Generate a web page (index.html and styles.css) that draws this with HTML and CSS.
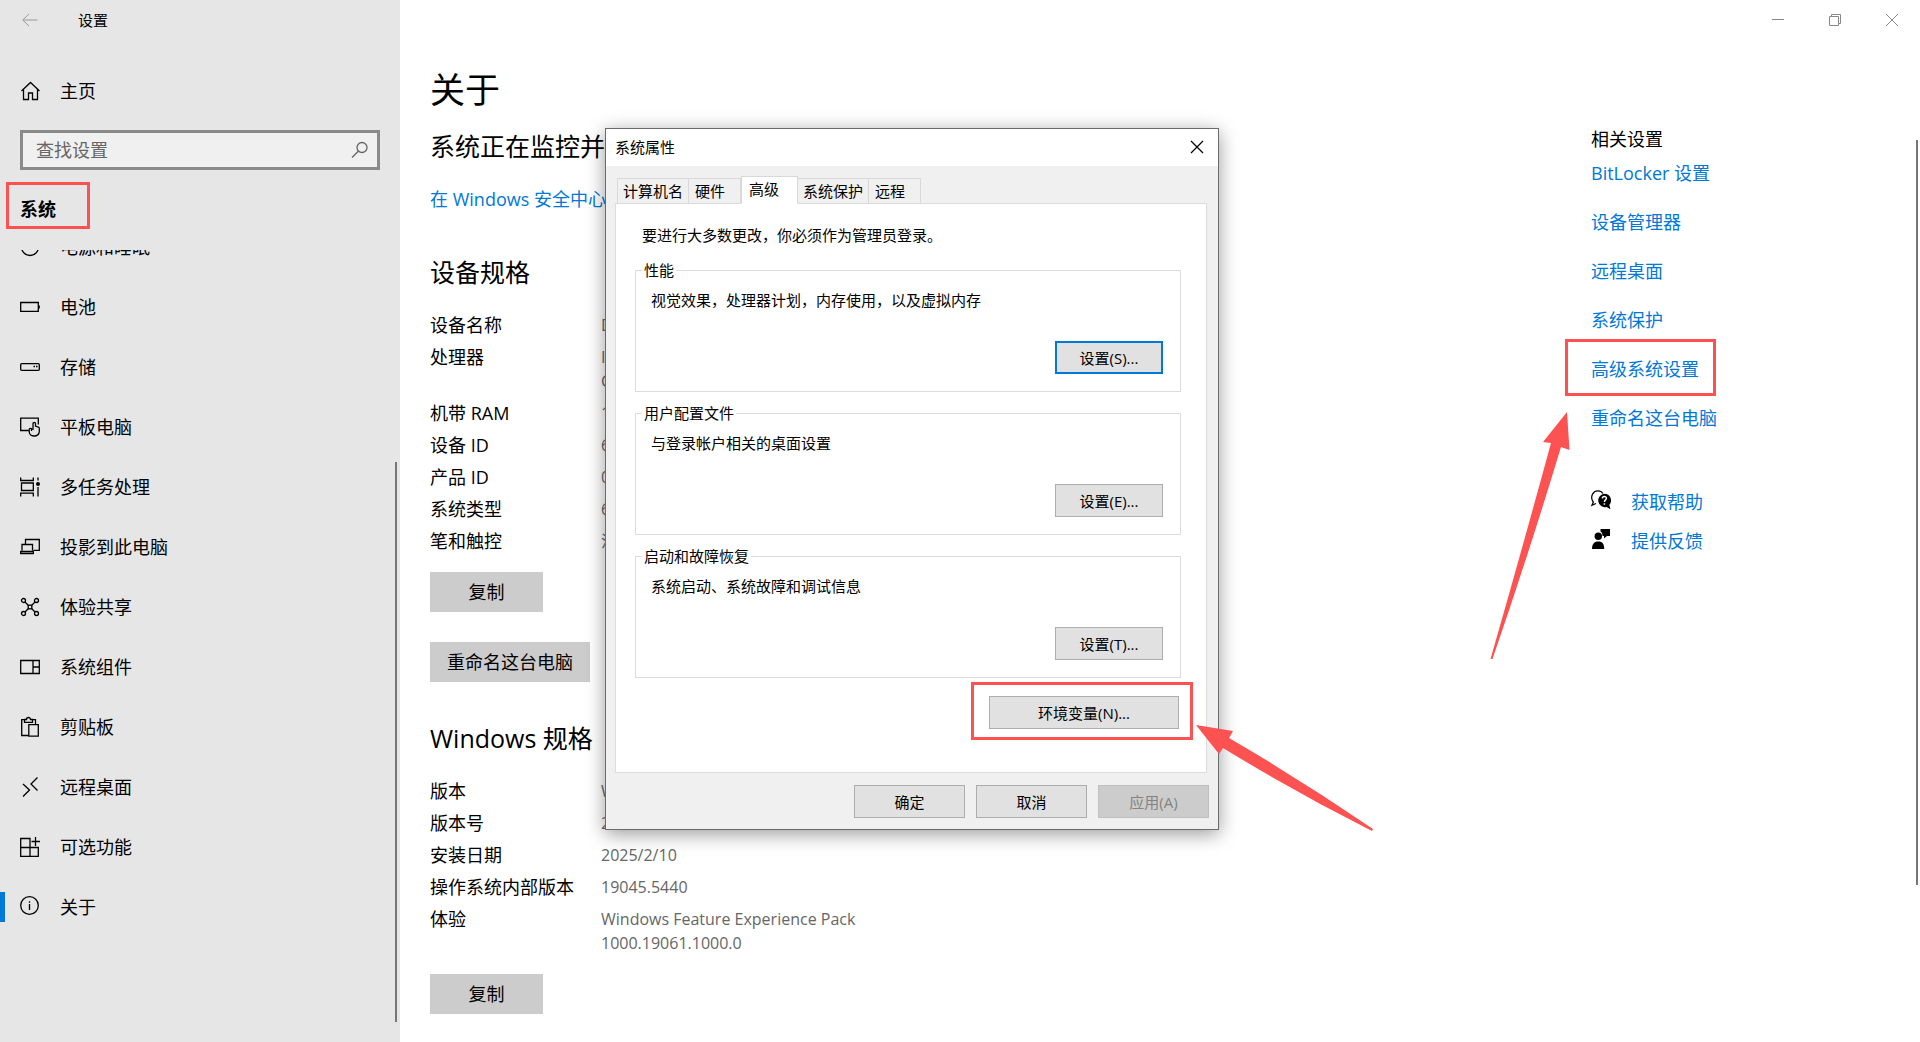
FILE: index.html
```html
<!doctype html>
<html lang="zh-CN">
<head>
    <meta charset="utf-8">
    <meta name="viewport" content="width=device-width, initial-scale=1">
    <title>设置</title>

    <link rel="stylesheet" href="styles.css">
</head>
<body>
<aside class="sidebar">
    <header class="titlebar">
        <button class="back" aria-label="返回">
            <svg width="16" height="14" viewBox="0 0 16 14"><path d="M15.500 7H1M7 .8L.8 7L7 13.200"/></svg>
        </button>
        <span>设置</span>
    </header>

    <a class="home" href="#">
        <svg class="icon" viewBox="0 0 20 20"><path d="M1.500 10L10.500 1.500L19.500 10M3.500 8.500V18.500H8.500V12H12.500V18.500H17.500V8.500"/></svg>
        <span>主页</span>
    </a>

    <div class="search">
        <input type="text" placeholder="查找设置" aria-label="查找设置">
        <svg width="18" height="18" viewBox="0 0 18 18"><circle cx="11" cy="6.500" r="5"/><path d="M7.300 10.200L1 16.500"/></svg>
    </div>

    <h2 class="group"><span class="mark mark-group"></span>系统</h2>

    <nav class="nav">
        <ul>
            <li><a href="#">
                <svg class="icon" viewBox="0 0 20 20"><circle cx="10" cy="10" r="8.500"/><path d="M10 1V10"/></svg>
                <span>电源和睡眠</span></a></li>
            <li><a href="#">
                <svg class="icon" viewBox="0 0 20 20"><path d="M.7 5.500H18.300V14.300H.7ZM19.200 8.500V11.500"/></svg>
                <span>电池</span></a></li>
            <li><a href="#">
                <svg class="icon" viewBox="0 0 20 20"><rect x=".7" y="6.700" width="18.600" height="6.600" rx="1"/><path d="M13.500 9.500H15M16 9.500H17.500"/></svg>
                <span>存储</span></a></li>
            <li><a href="#">
                <svg class="icon" viewBox="0 0 20 20"><path d="M8.500 13.500H.7V1.200H18.300V7.500M11.500 14V11.500C10 11 9.200 11.700 9.200 13V14.500C9.200 20.500 19.300 20.500 19.300 14.500V11C19.300 9.800 17.800 9.800 15.500 9.200V6.500C15.500 5 13 5 13 6.500V13"/></svg>
                <span>平板电脑</span></a></li>
            <li><a href="#">
                <svg class="icon" viewBox="0 0 20 20"><path d="M.7 .5V3.500H13.300V.5M1.500 6H13.300V13.500H1.500ZM.7 19.500V16.200H13.300V19.500M18 .5V3.500M18 10V19.500"/><circle class="fill" cx="18" cy="7" r="2"/></svg>
                <span>多任务处理</span></a></li>
            <li><a href="#">
                <svg class="icon" viewBox="0 0 20 20"><path d="M5.500 7.500V2.500H19.300V13.300H13.500M2 13.500V7.500H12.500V13.500M.7 16.500V14.500H13.300V16.500Z"/></svg>
                <span>投影到此电脑</span></a></li>
            <li><a href="#">
                <svg class="icon" viewBox="0 0 20 20"><circle cx="3.500" cy="3.500" r="2"/><circle cx="16.500" cy="3.500" r="2"/><circle cx="3.500" cy="16.500" r="2"/><circle cx="16.500" cy="16.500" r="2"/><rect x="8.200" y="8.200" width="3.600" height="3.600"/><path d="M5 5L8.200 8.200M15 5L11.800 8.200M5 15L8.200 11.800M15 15L11.800 11.800"/></svg>
                <span>体验共享</span></a></li>
            <li><a href="#">
                <svg class="icon" viewBox="0 0 20 20"><path d="M.7 3.500H19.300V16.500H.7ZM13 3.500V16.500M13 10H19.300"/></svg>
                <span>系统组件</span></a></li>
            <li><a href="#">
                <svg class="icon" viewBox="0 0 20 20"><path d="M8.500 18.500H1.700V2.700H4.500M12.500 2.700H15.500V7M4.500 2.500V5.300H12.500V2.500H10.500C10.500 -.2 6.500 -.2 6.500 2.500ZM8.800 7.700H18.300V19.200H8.800Z"/></svg>
                <span>剪贴板</span></a></li>
            <li><a href="#">
                <svg class="icon" viewBox="0 0 20 20"><path d="M3 7L9.500 13L3 19.500M17.500 .5L11 7L17.500 13.500"/></svg>
                <span>远程桌面</span></a></li>
            <li><a href="#">
                <svg class="icon" viewBox="0 0 20 20"><path d="M10 10.500H.7V1.500H10V19.300M.7 10.500V19.300H18.300V10.500H10M15.500 0V9M11.500 4.500H20"/></svg>
                <span>可选功能</span></a></li>
            <li><a class="current" href="#">
                <svg class="icon" viewBox="0 0 20 20"><circle cx="9.500" cy="8.500" r="8.800"/><path d="M9.500 7V13M9.500 4.200V5.700"/></svg>
                <span>关于</span></a></li>
        </ul>
    </nav>
    <div class="thumb thumb-side"></div>
</aside>

<main class="main">
    <div class="window-controls">
        <button aria-label="最小化"><svg width="14" height="14" viewBox="0 0 14 14"><path d="M1 6.500H13"/></svg></button>
        <button aria-label="还原"><svg width="14" height="14" viewBox="0 0 14 14"><path d="M1.500 3.500H10.500V12.500H1.500ZM3.500 3.500V1.500H12.500V10.500H10.500"/></svg></button>
        <button aria-label="关闭"><svg width="14" height="14" viewBox="0 0 14 14"><path d="M1 1L13 13M13 1L1 13"/></svg></button>
    </div>

    <div class="page">
        <section class="about">
            <h1>关于</h1>
            <p class="status">系统正在监控并保护你的电脑。</p>
            <a class="security" href="#">在 Windows 安全中心中查看详细信息</a>

            <h2>设备规格</h2>
            <dl class="specs">
                <dt>设备名称</dt><dd>DESKTOP</dd>
                <dt>处理器</dt><dd>Intel(R)<br>CPU</dd>
                <dt>机带 RAM</dt><dd>16.0 GB</dd>
                <dt>设备 ID</dt><dd>6</dd>
                <dt>产品 ID</dt><dd>0</dd>
                <dt>系统类型</dt><dd>64 位操作系统</dd>
                <dt>笔和触控</dt><dd>没有笔</dd>
            </dl>
            <button class="action">复制</button>
            <button class="action rename">重命名这台电脑</button>

            <h2>Windows 规格</h2>
            <dl class="specs">
                <dt>版本</dt><dd>Windows 10</dd>
                <dt>版本号</dt><dd>22H2</dd>
                <dt>安装日期</dt><dd>2025/2/10</dd>
                <dt>操作系统内部版本</dt><dd>19045.5440</dd>
                <dt>体验</dt><dd>Windows Feature Experience Pack<br>1000.19061.1000.0</dd>
            </dl>
            <button class="action">复制</button>
        </section>

        <section class="related">
            <h3>相关设置</h3>
            <ul>
                <li><a href="#">BitLocker 设置</a></li>
                <li><a href="#">设备管理器</a></li>
                <li><a href="#">远程桌面</a></li>
                <li><a href="#">系统保护</a></li>
                <li class="marked"><a href="#">高级系统设置</a>
                    <span class="mark mark-link"></span>
                    <svg class="arrow arrow-link" width="80" height="250" viewBox="0 0 80 250"><path d="M77 2L53 32L61 33Q31 143 .5 249H2.500Q39 143 71 37L79.500 40Z"/></svg>
                </li>
                <li><a href="#">重命名这台电脑</a></li>
            </ul>
            <div class="help">
                <a href="#">
                    <svg width="20" height="20" viewBox="0 0 20 20"><path class="outline" d="M5 13.500L1 15.300L2.300 12C-1.500 7 2 .8 7 .8C9.500 .8 11 2 12 3.500"/><path d="M13.500 3.800A6.700 6.700 0 1 0 15.500 17L19.500 19.300L18.300 15A6.700 6.700 0 0 0 13.500 3.800Z"/><path class="question" d="M11.400 8.500C11.400 6 15.400 6 15.400 8.300C15.400 10 13.400 9.800 13.400 12M13.400 13.300V14.700"/></svg>
                    <span>获取帮助</span>
                </a>
                <a href="#">
                    <svg width="20" height="20" viewBox="0 0 20 20"><path d="M9.500 0H19V7H16L13 9.500V7H11.500C11.500 4.500 11 3.500 9.500 2.500Z"/><circle cx="7.300" cy="7.200" r="3.700"/><path d="M1 20C1 15 3 12.500 7.300 12.500S13.200 15 13.200 20Z"/></svg>
                    <span>提供反馈</span>
                </a>
            </div>
        </section>
    </div>
    <div class="thumb thumb-main"></div>
</main>

<div class="dialog" role="dialog" aria-labelledby="dialog-title">
    <header class="dialog-title">
        <span id="dialog-title">系统属性</span>
        <button aria-label="关闭"><svg width="14" height="14" viewBox="0 0 14 14"><path d="M1 1L13 13M13 1L1 13"/></svg></button>
    </header>

    <div class="tabs" role="tablist">
        <button role="tab" class="full">计算机名</button>
        <button role="tab">硬件</button>
        <button role="tab" class="active" aria-selected="true">高级</button>
        <button role="tab" class="full">系统保护</button>
        <button role="tab">远程</button>
    </div>

    <div class="panel">
        <p class="note">要进行大多数更改，你必须作为管理员登录。</p>
        <fieldset>
            <legend>性能</legend>
            <p>视觉效果，处理器计划，内存使用，以及虚拟内存</p>
            <button class="btn default">设置(S)...</button>
        </fieldset>
        <fieldset>
            <legend>用户配置文件</legend>
            <p>与登录帐户相关的桌面设置</p>
            <button class="btn">设置(E)...</button>
        </fieldset>
        <fieldset>
            <legend>启动和故障恢复</legend>
            <p>系统启动、系统故障和调试信息</p>
            <button class="btn">设置(T)...</button>
        </fieldset>
        <div class="env">
            <button class="btn">环境变量(N)...</button>
            <span class="mark mark-env"></span>
            <svg class="arrow arrow-env" width="180" height="108" viewBox="0 0 180 108"><path d="M1 1L38 7L34 14Q108 57 178 105L177 107Q100 68 28 24L24 30Z"/></svg>
        </div>
    </div>

    <footer class="dialog-buttons">
        <button class="btn">确定</button>
        <button class="btn">取消</button>
        <button class="btn" disabled>应用(A)</button>
    </footer>
</div>
</body>
</html>
```
FILE: styles.css
```css
* {
    box-sizing: border-box;
}

body {
    margin: 0;
    display: flex;
    height: 100vh;
    overflow: hidden;
    position: relative;
    background: #fff;
    color: #000;
    font-family: "Open Sans", "Noto Sans CJK SC", sans-serif;
    font-size: 18px;
    line-height: 24px;
}

h1, h2, h3, p, ul, dl, dd, fieldset {
    margin: 0;
    padding: 0;
    font-weight: 400;
}

ul {
    list-style: none;
}

a {
    color: #0078d7;
    text-decoration: none;
}

button {
    border: 0;
    padding: 0;
    background: none;
    color: inherit;
    font: inherit;
}

svg {
    display: block;
    flex: none;
    overflow: visible;
}

/* sidebar */
.sidebar {
    position: relative;
    flex: none;
    display: flex;
    flex-direction: column;
    width: 400px;
    background: #e6e6e6;
}

.sidebar a {
    display: flex;
    align-items: center;
    gap: 20px;
    color: #000;
}

.titlebar {
    display: flex;
    align-items: center;
    gap: 40px;
    height: 40px;
    padding-left: 22px;
    font-size: 15px;
}

.back svg {
    fill: none;
    stroke: #999;
}

.icon {
    width: 20px;
    height: 20px;
    fill: none;
    stroke: #000;
    stroke-width: 1.3;
}

.icon .fill {
    fill: #000;
    stroke: none;
}

.sidebar .home {
    height: 60px;
    margin-top: 21px;
    padding-left: 20px;
}

.search {
    display: flex;
    align-items: center;
    height: 40px;
    margin: 9px 20px 0;
    padding: 0 8px 0 13px;
    border: 3px solid #8a8a8a;
    background: #f0f0f0;
}

.search input {
    flex: 1;
    min-width: 0;
    padding: 0;
    border: 0;
    outline: 0;
    background: none;
    font: inherit;
}

.search input::placeholder {
    color: #666;
    opacity: 1;
}

.search svg {
    fill: none;
    stroke: #666;
    stroke-width: 1.3;
}

.group {
    position: relative;
    margin-top: 27px;
    padding-left: 20px;
    font-size: 18px;
    font-weight: 700;
}

.nav {
    flex: 1;
    margin-top: 29px;
    overflow: hidden;
}

/* list is scrolled, first entry is cut off */
.nav ul {
    margin-top: -33px;
}

.nav a {
    height: 60px;
    padding-left: 20px;
}

.nav .current {
    background: linear-gradient(#0078d7, #0078d7) 0 50% / 5px 30px no-repeat;
}

.thumb {
    position: absolute;
    width: 2px;
    background: #767676;
}

.thumb-side {
    top: 462px;
    right: 3px;
    bottom: 20px;
}

.thumb-main {
    top: 140px;
    right: 2px;
    height: 745px;
}

/* content */
.main {
    position: relative;
    flex: 1;
    min-width: 0;
}

.window-controls {
    display: flex;
    justify-content: flex-end;
    height: 40px;
}

.window-controls button {
    display: flex;
    align-items: center;
    justify-content: center;
    width: 57px;
}

.window-controls svg {
    fill: none;
    stroke: #888;
}

.page {
    display: flex;
    justify-content: space-between;
    padding-left: 30px;
}

.about h1 {
    margin-top: 26px;
    font-size: 35px;
    line-height: 48px;
}

.status {
    margin-top: 16px;
    font-size: 25px;
    line-height: 32px;
}

.security {
    display: block;
    margin: 25px 0 45px;
}

.about h2 {
    margin-top: 40px;
    font-size: 25px;
    line-height: 32px;
}

.specs {
    display: grid;
    grid-template-columns: 171px 1fr;
    row-gap: 8px;
    margin-top: 25px;
}

.specs dd {
    color: #666;
    font-size: 16px;
}

.action {
    display: block;
    min-width: 113px;
    height: 40px;
    margin-top: 19px;
    padding: 0 17px;
    background: #ccc;
}

.rename {
    margin-top: 30px;
}

.related {
    width: 329px;
    padding-top: 87px;
}

.related ul {
    display: grid;
    gap: 25px;
    margin-top: 10px;
}

.related h3 {
    font-size: 18px;
}

.marked {
    position: relative;
}

.help {
    display: grid;
    gap: 15px;
    margin-top: 60px;
}

.help a {
    display: flex;
    gap: 20px;
}

.help .outline {
    fill: none;
    stroke: #000;
    stroke-width: 1.3;
}

.help .question {
    fill: none;
    stroke: #fff;
    stroke-width: 1.5;
}

/* red marks and arrows */
.mark {
    position: absolute;
    border: 3px solid #fc5252;
    pointer-events: none;
}

.mark-group {
    top: -15px;
    left: 6px;
    width: 84px;
    height: 47px;
}

.mark-link {
    top: -18px;
    left: -26px;
    width: 151px;
    height: 57px;
}

.mark-env {
    top: -14px;
    right: -14px;
    width: 222px;
    height: 58px;
}

.arrow {
    position: absolute;
    fill: #fc5252;
    pointer-events: none;
}

.arrow-link {
    top: 53px;
    left: -101px;
}

.arrow-env {
    top: 28px;
    left: 100%;
    margin-left: 16px;
}

/* dialog */
.dialog {
    position: absolute;
    top: 128px;
    left: 605px;
    width: 614px;
    border: 1px solid #6b6b6b;
    background: #f0f0f0;
    box-shadow: 0 4px 18px rgba(0, 0, 0, .4);
    font-size: 15px;
    line-height: 20px;
}

.dialog-title {
    display: flex;
    align-items: center;
    justify-content: space-between;
    height: 37px;
    padding: 0 14px 2px 9px;
    background: #fff;
}

.dialog-title svg {
    fill: none;
    stroke: #000;
    stroke-width: 1.2;
}

.tabs {
    display: flex;
    align-items: flex-end;
    height: 38px;
    padding: 0 11px;
}

.tabs button {
    height: 26px;
    padding: 0 15px 0 6px;
    border: 1px solid #d9d9d9;
    border-left: 0;
}

.tabs .full {
    padding: 0 5px;
}

.tabs button:first-child {
    border-left: 1px solid #d9d9d9;
}

.tabs .active {
    height: 28px;
    padding: 0 18px 3px 7px;
    border-left: 1px solid #d9d9d9;
    border-bottom-color: #fff;
    background: #fff;
    z-index: 1;
}

.panel {
    margin: -1px 11px 0 9px;
    padding: 21px 25px 43px 19px;
    border: 1px solid #dcdcdc;
    background: #fff;
}

.note {
    padding-left: 7px;
}

.panel fieldset {
    display: flex;
    flex-direction: column;
    height: 133px;
    margin-top: 10px;
    padding: 0 17px 17px 15px;
    border: 1px solid #dcdcdc;
}

.panel .note + fieldset {
    margin-top: 14px;
}

.panel legend {
    margin-left: -9px;
    padding: 0 2px;
    line-height: 22px;
}

.panel fieldset p {
    margin-top: 9px;
}

.btn {
    width: 111px;
    height: 33px;
    border: 1px solid #adadad;
    background: #e1e1e1;
}

.panel fieldset .btn {
    width: 108px;
    margin-top: auto;
    margin-left: auto;
}

.panel .default {
    border: 2px solid #0078d7;
}

.btn:disabled {
    border-color: #bfbfbf;
    background: #ccc;
    color: #838383;
}

.env {
    position: relative;
    width: 190px;
    margin: 18px 2px 0 auto;
}

.env .btn {
    display: block;
    width: 100%;
}

.dialog-buttons {
    display: flex;
    justify-content: flex-end;
    gap: 11px;
    padding: 12px 9px 11px;
}
```
